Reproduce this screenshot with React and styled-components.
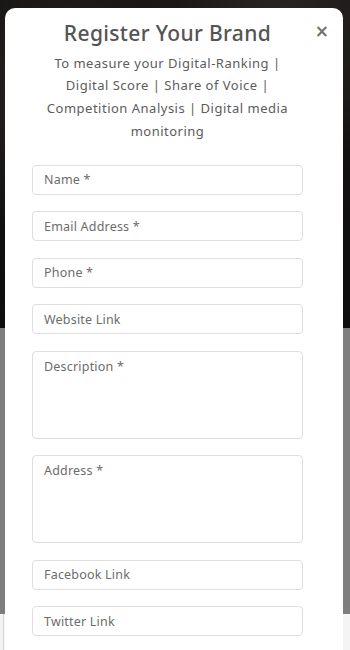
import React from "react";
import styled, { createGlobalStyle } from "styled-components";

const GlobalStyle = createGlobalStyle`
  html, body {
    margin: 0;
    padding: 0;
    background: #f3f3f3;
    font-family: "Noto Sans", "Open Sans", Arial, sans-serif;
  }
  * {
    box-sizing: border-box;
  }
`;

const Page = styled.div`
  position: relative;
  width: 350px;
  height: 650px;
  overflow: hidden;
  display: grid;
  grid-template-rows: 328px 286px 1fr;
`;

const Hero = styled.div`
  background:
    radial-gradient(circle at 20% 30%, #2a2624 0, transparent 40%),
    radial-gradient(circle at 80% 10%, #2b2727 0, transparent 35%),
    linear-gradient(180deg, #161413 0%, #0f0e0e 100%);
`;

const Shade = styled.div`
  background: #7e7e7e;
`;

const Footer = styled.div`
  background: #f4f4f4;
  border-left: 1px solid #d8d8d8;
  margin-left: 3px;
`;

const Modal = styled.div`
  position: absolute;
  top: 8px;
  left: 5px;
  width: 338px;
  height: 660px;
  background: #fff;
  border-radius: 10px 10px 0 0;
  padding: 11px 40px 0 27px;
`;

const Close = styled.button`
  position: absolute;
  top: 15px;
  right: 14px;
  border: none;
  background: none;
  padding: 0;
  color: #727272;
  font-size: 17px;
  font-weight: 700;
  line-height: 1;
  font-family: "DejaVu Sans", sans-serif;
  cursor: pointer;
`;

const Title = styled.h2`
  margin: 0;
  text-align: center;
  font-size: 21px;
  font-weight: 500;
  letter-spacing: 0.35px;
  color: #545454;
  line-height: 28px;
`;

const Subtitle = styled.p`
  margin: 4.5px 0 0;
  text-align: center;
  font-size: 13px;
  line-height: 22.7px;
  letter-spacing: 0.5px;
  color: #5c5c5c;
`;

const Form = styled.form`
  margin-top: 22.5px;
  display: flex;
  flex-direction: column;
  gap: 16.5px;
`;

const Field = styled.input`
  height: 30px;
  width: 100%;
  border: 1px solid #dedede;
  border-radius: 4px;
  padding: 0 11px;
  font-family: inherit;
  font-size: 12.5px;
  letter-spacing: 0.2px;
  color: #333;
  outline: none;

  &::placeholder {
    color: #6c6c6c;
  }
`;

const Area = styled.textarea`
  height: 88px;
  width: 100%;
  border: 1px solid #dedede;
  border-radius: 4px;
  padding: 6px 11px;
  font-family: inherit;
  font-size: 12.5px;
  letter-spacing: 0.2px;
  line-height: 18px;
  resize: none;
  color: #333;
  outline: none;

  &::placeholder {
    color: #6c6c6c;
  }
`;

const App = () => {
  return (
    <>
      <GlobalStyle />
      <Page>
        <Hero />
        <Shade />
        <Footer />
        <Modal>
          <Close aria-label="Close">×</Close>
          <Title>Register Your Brand</Title>
          <Subtitle>
            To measure your Digital-Ranking |<br />
            Digital Score | Share of Voice |<br />
            Competition Analysis | Digital media<br />
            monitoring
          </Subtitle>
          <Form onSubmit={(e) => e.preventDefault()}>
            <Field placeholder="Name *" />
            <Field placeholder="Email Address *" />
            <Field placeholder="Phone *" />
            <Field placeholder="Website Link" />
            <Area placeholder="Description *" />
            <Area placeholder="Address *" />
            <Field placeholder="Facebook Link" />
            <Field placeholder="Twitter Link" />
          </Form>
        </Modal>
      </Page>
    </>
  );
};

export default App;
